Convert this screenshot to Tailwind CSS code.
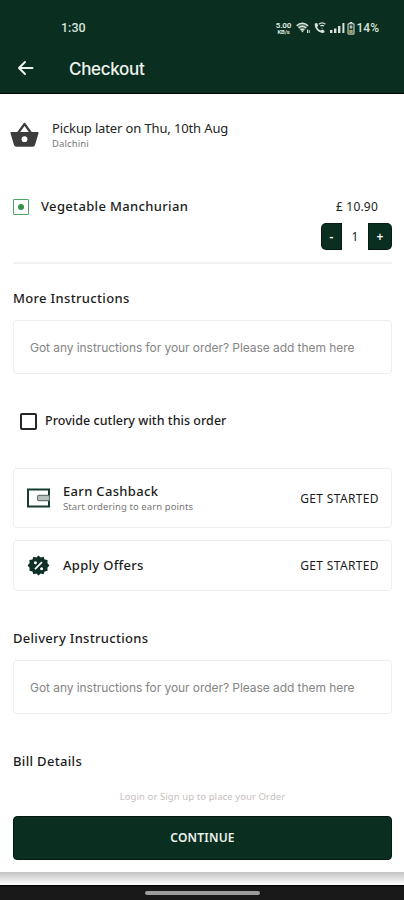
<!DOCTYPE html>
<html lang="en">
<head>
<meta charset="utf-8">
<title>Checkout</title>
<script src="https://cdn.jsdelivr.net/npm/@tailwindcss/browser@4"></script>
</head>
<body class="w-[404px] h-[900px] overflow-hidden bg-white font-['Noto_Sans','Open_Sans',sans-serif] text-[#1c1c1c] whitespace-nowrap">
<div class="flex flex-col h-[900px]">
  <header class="h-[94px] shrink-0 bg-[#0a2e20] border-b border-black text-[#eef3ef] flex flex-col">
    <div class="flex items-center justify-between pl-[61px] pr-[25px] pt-[19px] h-[37px] shrink-0 font-['Roboto',sans-serif] font-medium text-[12px] leading-[18px] text-[#d9e3dc]">
      <span class="text-[12.5px]">1:30</span>
      <div class="flex items-center">
        <div class="w-[16px] mr-[4px] flex flex-col items-center font-bold text-[8px] leading-[7px] tracking-[-0.2px]"><span class="h-[7px]">5.00</span><span class="h-[5px] text-[6px] leading-[5px]">KB/s</span></div>
        <svg class="mr-[4px]" width="14" height="12" viewBox="0 0 14 12"><path d="M.5 3.500C4 .2 9 .2 12.500 3.500L6.500 10.500z" fill="currentColor" opacity=".35"/><path d="M.7 3.800C4 .5 8.600.5 12 3.800M2.700 6C5 3.900 7.800 3.900 10 6M4.600 8c1.200-1 2.400-1 3.600 0" fill="none" stroke="currentColor" stroke-width="1.500"/><path d="M6.400 10.500l-1.300-2h2.600z" fill="currentColor"/><path d="M11.500 11V7.500M13.200 8v3" stroke="currentColor" stroke-width="1"/></svg>
        <svg class="mr-[4px]" width="12" height="12" viewBox="0 0 12 12"><path d="M.8 1.500L3 1l1.200 2.600-1.100 1.300c.8 1.700 1.900 2.800 3.600 3.700L8 7.400l2.600 1.300-.5 2.100C5 11.600.2 6.700.8 1.500z" fill="currentColor"/><path d="M4.800 2.200C6.800.6 9.500.6 11.400 2.200M6.300 4c1.200-.9 2.500-.9 3.700 0M8.100 5.700v.6" fill="none" stroke="currentColor" stroke-width="1.300"/></svg>
        <svg class="mr-[2px]" width="15" height="12" viewBox="0 0 15 12" fill="currentColor"><path d="M0 8h2.400v3H0zM4 6.500h2.400V11H4zM8 4h2.400v7H8zM12.400 1h2v10h-2z"/></svg>
        <svg class="mr-[2px]" width="8" height="13" viewBox="0 0 8 13"><path d="M2.700 0h2.600v1.500H2.700z" fill="#d9e3dc"/><rect x="1" y="1.700" width="6" height="10.500" rx="1" fill="#244233" stroke="#b9c8b6" stroke-width="1.200"/><path d="M2.300 8h3.400v3H2.300z" fill="#a8a55c"/><path d="M4 3.200v3.600M2.500 5h3" stroke="#d9e3dc"/></svg>
        <span>14%</span>
      </div>
    </div>
    <div class="flex items-center h-[56px] pt-[8px] pl-[17px]">
      <svg class="-mt-[3px]" width="18" height="16" viewBox="0 0 18 16" fill="none" stroke="currentColor" stroke-width="2" stroke-linecap="round" stroke-linejoin="round"><path d="M15.500 8H2M8 2L2 8l6 6"/></svg>
      <h1 class="ml-[34px] font-['Inter',sans-serif] font-medium text-[17px] leading-6 tracking-[-0.3px]">Checkout</h1>
    </div>
  </header>

  <main class="pl-[13px] pr-[12px] flex flex-col h-[683px] shrink-0">
    <section class="flex h-[83px] pt-[25px] -ml-[3px]">
      <svg class="mt-[3px]" width="29" height="27" viewBox="0 0 29 27"><path d="M1.500 10h26a1 1 0 0 1 1 1.300L25 23a2.500 2.500 0 0 1-2.400 1.800H6.400A2.500 2.500 0 0 1 4 23L.5 11.300A1 1 0 0 1 1.500 10z" fill="#3c3c3c"/><path d="M8 11l6.500-9L21 11" fill="none" stroke="#3c3c3c" stroke-width="2.200" stroke-linejoin="round"/><circle cx="14.500" cy="17.200" r="2.900" fill="#fff"/></svg>
      <div class="ml-[13px]">
        <p class="text-[13px] leading-[19px] tracking-[-0.13px] text-[#252525]">Pickup later on Thu, 10th Aug</p>
        <p class="text-[9.5px] leading-[12px] tracking-[0.1px] text-[#777]">Dalchini</p>
      </div>
    </section>
    <section class="h-[87px] shrink-0 border-b-2 border-[#f1f1f1] flex flex-col pt-[20px]">
      <div class="flex items-center h-[20px]">
        <div class="size-[16px] border-[1.500px] border-[#4da561] flex items-center justify-center rounded-[1px]"><div class="size-[6px] rounded-full bg-[#329447]"></div></div>
        <span class="ml-[12px] text-[13px] font-medium tracking-[0.34px]">Vegetable Manchurian</span>
        <span class="ml-auto mr-[14px] text-[12px] tracking-[0.2px]">£ 10.90</span>
      </div>
      <div class="mt-[6px] ml-auto h-[27px] w-[71px] flex text-[12px] font-semibold">
        <button class="w-[21px] rounded-l-[5px] bg-[#0a2e20] text-white border border-black/40">-</button>
        <span class="flex-1 flex items-center justify-center font-normal">1</span>
        <button class="w-[24px] rounded-r-[5px] bg-[#0a2e20] text-white border border-black/40">+</button>
      </div>
    </section>
    <h2 class="mt-[24px] h-[20px] leading-[20px] text-[13px] font-medium tracking-[0.33px]">More Instructions</h2>
    <div class="mt-[12px] h-[54px] shrink-0 rounded-[4px] border-[1.500px] border-[#eee] pl-[16px] pt-[2px] flex items-center font-['Inter','Liberation_Sans',sans-serif] text-[12px] tracking-[-0.06px] text-[#858585]">Got any instructions for your order? Please add them here</div>
    <label class="mt-[36px] h-[22px] flex items-center pl-[7px]">
      <span class="size-[17px] rounded-[2px] border-2 border-[#262626]"></span>
      <span class="ml-[8px] text-[12.5px] font-medium tracking-[0.04px]">Provide cutlery with this order</span>
    </label>
    <div class="mt-[36px] h-[60px] shrink-0 rounded-[4px] border-[1.500px] border-[#eee] flex items-center pl-[12px] pr-[12px]">
      <svg width="25" height="20" viewBox="0 0 25 20" fill="none"><rect x="2" y="1.500" width="21" height="17" stroke="#173b30" stroke-width="2"/><rect x="11.500" y="7.300" width="12" height="5.400" rx="1.500" fill="#b8bfbc" stroke="#68766f" stroke-width="1.200"/></svg>
      <div class="ml-[12px]"><p class="text-[13px] leading-[17px] font-medium tracking-[0.33px]">Earn Cashback</p><p class="text-[9.5px] leading-[14px] tracking-[0.09px] text-[#777]">Start ordering to earn points</p></div>
      <span class="ml-auto pt-[1px] text-[12px] tracking-[0.36px]">GET STARTED</span>
    </div>
    <div class="mt-[12px] h-[51px] shrink-0 rounded-[4px] border-[1.500px] border-[#eee] flex items-center pl-[12px] pr-[12px]">
      <svg width="25" height="24" viewBox="0 0 25 24"><path d="M12.500 1.500l2.200 2 2.900-.8 1 2.800 3 .6-.2 3 2 2.300-2 2.300.2 3-3 .7-1 2.800-2.900-.8-2.200 2.100-2.200-2.100-2.900.8-1-2.800-3-.7.2-3-2-2.300 2-2.300-.2-3 3-.6 1-2.800 2.900.8z" fill="#102f26"/><path d="M9 15.200l7-7" stroke="#fff" stroke-width="1.700"/><circle cx="9.400" cy="8.800" r="1.500" fill="#fff"/><circle cx="15.600" cy="14.800" r="1.500" fill="#fff"/></svg>
      <span class="ml-[12px] text-[13px] font-medium tracking-[0.3px]">Apply Offers</span>
      <span class="ml-auto text-[12px] tracking-[0.36px]">GET STARTED</span>
    </div>
    <h2 class="mt-[37px] h-[20px] leading-[20px] text-[13px] font-medium tracking-[0.3px]">Delivery Instructions</h2>
    <div class="mt-[12px] h-[54px] shrink-0 rounded-[4px] border-[1.500px] border-[#eee] pl-[16px] pt-[2px] flex items-center font-['Inter','Liberation_Sans',sans-serif] text-[12px] tracking-[-0.06px] text-[#858585]">Got any instructions for your order? Please add them here</div>
    <h2 class="mt-[37px] h-[20px] leading-[20px] text-[13px] font-medium tracking-[0.33px]">Bill Details</h2>
  </main>

  <footer class="h-[95px] shrink-0 pl-[13px] pr-[12px] pt-[12px] bg-white">
    <p class="text-center text-[9.500px] leading-[16px] tracking-[0.09px] text-[#c6c0be]">Login or Sign up to place your Order</p>
    <button class="mt-[11px] w-full h-[44px] rounded-[4px] bg-[#0a2e20] border border-[#041a10] text-[#eef3ef] text-[12px] font-semibold tracking-[0.2px] block">CONTINUE</button>
  </footer>
  <div class="h-[13px] shrink-0 bg-linear-to-b from-[#c4c4c4] to-white"></div>
  <div class="h-[15px] shrink-0 bg-[#181818] border-t border-black flex justify-center pt-[5px]"><div class="w-[115px] h-[4px] rounded-full bg-[#9c9c9c]"></div></div>
</div>
</body>
</html>
